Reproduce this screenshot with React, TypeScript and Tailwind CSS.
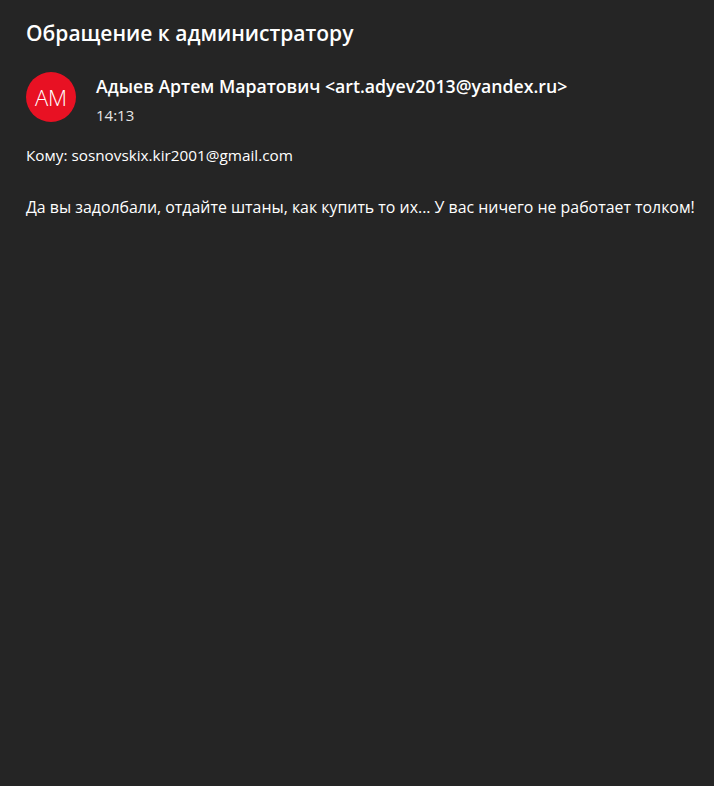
export default function App() {
  return (
    <div className="min-h-screen bg-[#252525] px-[26px] pt-[18px] text-white" style={{ fontFamily: '"Open Sans", "Noto Sans", sans-serif' }}>
      <h1 className="text-[21px] font-semibold leading-[30px]">Обращение к администратору</h1>
      <div className="mt-[24px] flex items-start gap-5">
        <div className="flex h-[50px] w-[50px] shrink-0 items-center justify-center rounded-full bg-[#e81123] text-[22px] font-light">
          AM
        </div>
        <div className="pt-[2px]">
          <div className="text-[17.7px] font-semibold leading-[24px]">Адыев Артем Маратович &lt;art.adyev2013@yandex.ru&gt;</div>
          <div className="mt-[7px] text-[15px] leading-[20px] text-[#e6e6e6]">14:13</div>
        </div>
      </div>
      <p className="mt-[20px] text-[15.3px] leading-[20px]">Кому: sosnovskix.kir2001@gmail.com</p>
      <p className="-mr-[26px] mt-[31px] whitespace-nowrap text-[15.9px] leading-[22px]">Да вы задолбали, отдайте штаны, как купить то их... У вас ничего не работает толком!</p>
    </div>
  );
}
